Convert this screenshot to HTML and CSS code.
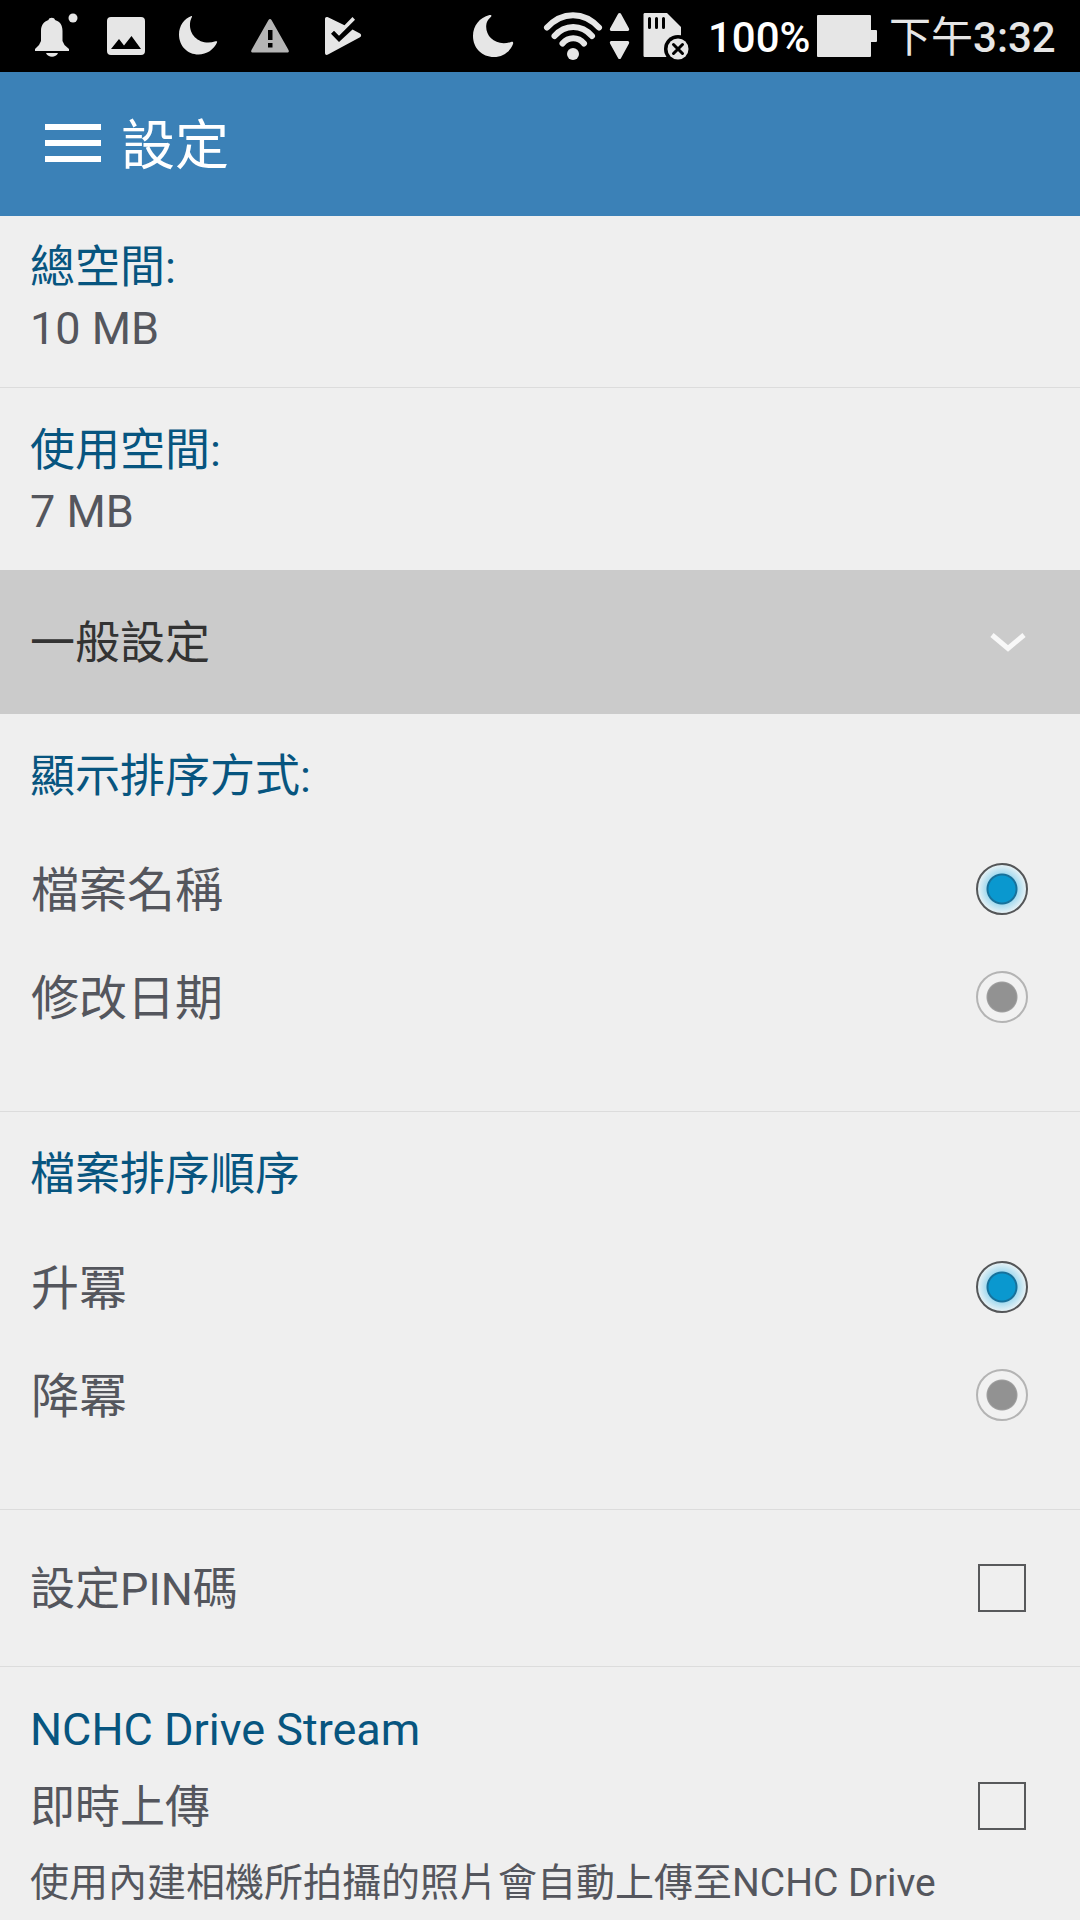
FILE: index.html
```html
<!DOCTYPE html>
<html lang="zh-Hant">
<head>
    <meta charset="UTF-8">
    <title>設定</title>
    <link rel="stylesheet" href="styles.css">
</head>
<body>

    <div class="status-bar">
        <div class="notifications">
            <svg viewBox="18 0 72 72" width="72" height="72">
                <path d="M35 51v-2l4-4 2-4V31c0-6 3-9.500 7.500-11 .3-3 6.200-3 6.500 0C60 21.500 62.500 25 62.500 31v10l2 4 4.500 4v2z"/>
                <path d="M46 53h12c-2 5-10 5-12 0z"/>
                <circle cx="73" cy="18" r="4.500"/>
            </svg>
            <svg viewBox="90 0 72 72" width="72" height="72">
                <path fill-rule="evenodd" d="M111 17h30a4 4 0 0 1 4 4v30a4 4 0 0 1-4 4h-30a4 4 0 0 1-4-4V21a4 4 0 0 1 4-4zM111 49h30l-9.500-13-7.500 9.500-5-6.500z"/>
            </svg>
            <svg viewBox="162 0 72 72" width="72" height="72">
                <path d="M191.500 16C184 18.500 179 26 179 34.500 179 46 187.500 54.500 198.500 54.500c8 0 15.500-5 18.500-12 .5-1.300-.3-1.600-1.500-1.200C202 46 189 37 190 23.500c.2-2.500.8-4.200 1.800-6.300.5-1 .2-1.500-.3-1.200z"/>
            </svg>
            <svg class="dim" viewBox="234 0 72 72" width="72" height="72">
                <path fill-rule="evenodd" d="M271.500 20l17 30c.8 1.500.2 2.500-1.500 2.500h-34c-1.700 0-2.300-1-1.500-2.500l17-30c.8-1.300 2.200-1.300 3 0zM268 30v10h4.500V30zM268 43v4.500h4.500V43z"/>
            </svg>
            <svg viewBox="306 0 72 72" width="72" height="72">
                <path d="M325 19c0-2 1.500-2.500 3-1.700l16.500 8L352.500 17l2.500 2.700-16 16-5-5-3 3 8 8.300 13.500-12.500 7.500 4c1.500 1 1.500 2.800 0 3.700L328 54.500c-1.500 1-3 .2-3-1.500z"/>
            </svg>
        </div>

        <div class="system">
            <svg viewBox="468 0 60 72" width="60" height="72">
                <path d="M489.500 15C479.500 17.500 473 26 473 36c0 12 9 21 21 21 8.500 0 16.500-5.500 19-13 .6-1.800-.3-2.600-2-2-15 5-27-6-24.500-18.500.6-2.800 2-4.500 4.500-6.800 1-1 .3-2-1.500-1.700z"/>
            </svg>
            <svg viewBox="528 0 78 72" width="78" height="72">
                <path class="wave" d="M547 27.500c15-16.500 37-16.500 52 0M554.500 36c10.500-12 27-12 37.500 0M562.500 43.500c6-7 15.500-7 21.500 0"/>
                <circle cx="573" cy="54" r="6"/>
            </svg>
            <svg viewBox="606 0 28 72" width="28" height="72">
                <path d="M618.300 13.500c.6-.8 1.900-.8 2.500 0l8.200 15c.5 1.500 0 2.500-1.500 2.500h-16c-1.500 0-2-1-1.500-2.500zM618.300 58.500c.6.800 1.900.8 2.500 0l8.200-15c.5-1.500 0-2.500-1.500-2.500h-16c-1.500 0-2 1-1.500 2.500z"/>
            </svg>
            <svg viewBox="634 0 66 72" width="66" height="72">
                <path d="M645 13h22l14 14v30h-36c-1 0-1.500-.5-1.500-1.500v-41c0-1 .5-1.500 1.500-1.500z"/>
                <path class="slots" d="M649.500 18.500v9M656.500 18.500v9M663.500 18.500v9"/>
                <circle class="cut" cx="678" cy="49" r="14"/>
                <circle cx="678" cy="49" r="10.500"/>
                <path class="cross" d="M673.500 44.500l9 9M682.500 44.500l-9 9"/>
            </svg>
            <span class="percent">100%</span>
            <svg viewBox="814 0 66 72" width="66" height="72">
                <path d="M818 15h52a1 1 0 0 1 1 1v14h5a1 1 0 0 1 1 1v10a1 1 0 0 1-1 1h-5v14a1 1 0 0 1-1 1h-52a1 1 0 0 1-1-1V16a1 1 0 0 1 1-1z"/>
            </svg>
            <span class="clock"><span class="period">下午</span>3:32</span>
        </div>
    </div>

    <div class="header">
        <div class="menu-icon">
            <span></span>
            <span></span>
            <span></span>
        </div>
        <h1>設定</h1>
    </div>

    <div class="section first">
        <div class="label">總空間:</div>
        <div class="value">10 MB</div>
    </div>

    <div class="section storage">
        <div class="label">使用空間:</div>
        <div class="value">7 MB</div>
    </div>

    <div class="group-title">
        <span>一般設定</span>
        <svg class="chevron" viewBox="0 0 40 24" width="40" height="24">
            <path d="M4 5l16 13.500L36 5"/>
        </svg>
    </div>

    <div class="section">
        <div class="label">顯示排序方式:</div>
        <div class="options">
            <label class="option"><span>檔案名稱</span><input type="radio" name="sortBy" checked></label>
            <label class="option"><span>修改日期</span><input type="radio" name="sortBy"></label>
        </div>
    </div>

    <div class="section">
        <div class="label">檔案排序順序</div>
        <div class="options">
            <label class="option"><span>升冪</span><input type="radio" name="sortOrder" checked></label>
            <label class="option"><span>降冪</span><input type="radio" name="sortOrder"></label>
        </div>
    </div>

    <label class="check-row pin">
        <span>設定PIN碼</span>
        <input type="checkbox">
    </label>

    <div class="section stream">
        <div class="label">NCHC Drive Stream</div>
        <label class="check-row">
            <span>即時上傳</span>
            <input type="checkbox">
        </label>
        <div class="description">使用內建相機所拍攝的照片會自動上傳至NCHC Drive</div>
    </div>

</body>
</html>
```

FILE: styles.css
```css
* {
    box-sizing: border-box;
}

body {
    margin: 0;
    height: 1920px;
    overflow: hidden;
    background: #efefef;
    color: #54565d;
    font-family: Roboto, "Noto Sans CJK TC", sans-serif;
    font-size: 45px;
    line-height: 60px;
}

/* Status bar */
.status-bar {
    display: flex;
    justify-content: space-between;
    height: 72px;
    padding: 0 24px 0 18px;
    background: #000;
    color: #e6e6e6;
    font-size: 42px;
    font-weight: 500;
    line-height: 75px;
}

.notifications,
.system {
    display: flex;
}

.status-bar svg {
    display: block;
    flex: none;
    fill: #e6e6e6;
}

.status-bar .dim {
    fill: #b5b5b5;
}

.status-bar .wave {
    fill: none;
    stroke: #e6e6e6;
    stroke-width: 6;
    stroke-linecap: round;
}

.slots,
.cross {
    stroke: #000;
    stroke-width: 3;
    stroke-linecap: round;
}

.status-bar .cut {
    fill: #000;
}

.percent {
    width: 114px;
    padding-left: 8px;
    color: #fff;
}

.clock {
    width: 176px;
    padding-left: 9px;
    white-space: nowrap;
}

.period {
    font-weight: 400;
}

/* Header */
.header {
    display: flex;
    align-items: center;
    gap: 20px;
    height: 144px;
    padding-left: 45px;
    background: #3b81b7;
    color: #fff;
}

.header h1 {
    margin: 0;
    padding-top: 5px;
    font-size: 54px;
    font-weight: 400;
}

.menu-icon {
    display: flex;
    flex-direction: column;
    gap: 10px;
    width: 56px;
    padding-bottom: 2px;
}

.menu-icon span {
    height: 6px;
    background: #fff;
}

/* Sections */
.section {
    padding: 33px 0 0 30px;
    border-bottom: 1px solid #dcdcdc;
}

.section.first,
.section.storage {
    padding-bottom: 28px;
    line-height: 61px;
}

.section.first {
    padding-top: 21px;
}

.section.storage {
    padding-top: 32px;
    border-bottom: none;
}

.label {
    color: #07557f;
}

.group-title {
    display: flex;
    align-items: center;
    justify-content: space-between;
    height: 144px;
    padding: 0 52px 0 30px;
    background: #cbcbcb;
    color: #333;
}

.chevron {
    fill: none;
    stroke: #f8f8f8;
    stroke-width: 5;
}

.options {
    padding: 28px 0 60px 1px;
}

.option {
    display: flex;
    align-items: center;
    justify-content: space-between;
    height: 108px;
    padding-right: 52px;
    font-size: 48px;
}

.option span,
.check-row span,
.group-title span {
    padding-top: 3px;
}

/* Radio buttons and checkboxes */
input {
    appearance: none;
    flex: none;
    margin: 0;
}

input[type="radio"] {
    width: 52px;
    height: 52px;
    border: 2px solid #b4b4b4;
    border-radius: 50%;
    background: radial-gradient(circle, #929292 14px, #a0a0a0 15px, #f1f1f1 16px);
}

input[type="radio"]:checked {
    border-color: #545658;
    background: radial-gradient(circle, #0a98cf 13px, #17719b 14px, #17719b 15px, #a9dcf0 16px, #e6f1f5 24px);
}

input[type="checkbox"] {
    width: 48px;
    height: 48px;
    border: 2px solid #58595b;
}

.check-row {
    display: flex;
    align-items: center;
    justify-content: space-between;
    height: 92px;
    padding-right: 54px;
}

.check-row.pin {
    height: 157px;
    padding-left: 30px;
    border-bottom: 1px solid #dcdcdc;
}

.section.stream {
    border-bottom: none;
}

.description {
    padding-top: 1px;
    font-size: 39px;
    white-space: nowrap;
}
```
